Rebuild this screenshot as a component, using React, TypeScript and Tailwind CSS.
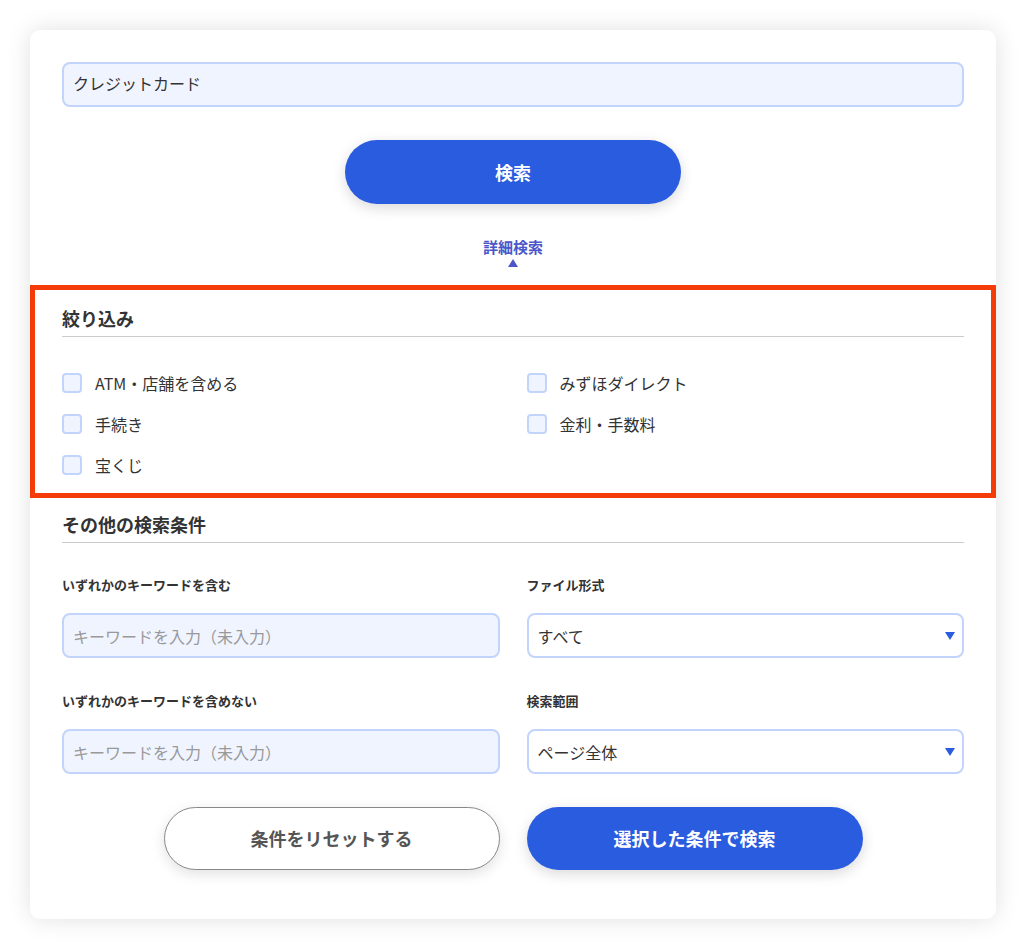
import React from "react";

const font = { fontFamily: '"Noto Sans CJK JP", "Noto Sans", sans-serif' };

const filters = [
  "ATM・店舗を含める",
  "みずほダイレクト",
  "手続き",
  "金利・手数料",
  "宝くじ",
];

function Checkbox({ label }: { label: string }) {
  return (
    <label className="flex h-[20px] items-center gap-[13px]">
      <span className="h-[20px] w-[20px] shrink-0 rounded-[4px] border-2 border-[#c3d4fc] bg-[#eff4ff]" />
      <span className="text-[16px] leading-none text-[#333]">{label}</span>
    </label>
  );
}

function Caret() {
  return (
    <svg width="10" height="8" viewBox="0 0 10 8" className="shrink-0">
      <path d="M0 0h10L5 8z" fill="#2a5ce0" />
    </svg>
  );
}

function TextField({ placeholder }: { placeholder: string }) {
  return (
    <div className="flex h-[45px] items-center rounded-[8px] border-2 border-[#c3d4fc] bg-[#eff4ff] px-[9px] text-[16px] text-[#999]">
      {placeholder}
    </div>
  );
}

function SelectField({ value }: { value: string }) {
  return (
    <div className="flex h-[45px] items-center justify-between rounded-[8px] border-2 border-[#c3d4fc] bg-white pl-[9px] pr-[7px] text-[16px] text-[#333]">
      <span>{value}</span>
      <Caret />
    </div>
  );
}

function SectionTitle({ children }: { children: React.ReactNode }) {
  return (
    <div className="border-b border-[#cccccc] pb-[5px]">
      <h2 className="text-[18px] font-bold leading-[26px] text-[#333]">{children}</h2>
    </div>
  );
}

export default function App() {
  return (
    <div className="min-h-[950px] bg-white p-[30px]" style={font}>
      <div className="rounded-[10px] bg-white px-8 pb-[49px] pt-[32px] shadow-[0_0_24px_rgba(0,0,0,0.12)]">
        {/* keyword */}
        <div className="flex h-[45px] items-center rounded-[8px] border-2 border-[#c3d4fc] bg-[#eff4ff] px-[9px] pb-[3px] text-[16px] text-[#333]">
          クレジットカード
        </div>

        <div className="mt-[33px] flex justify-center">
          <button className="h-[64px] w-[336px] rounded-full bg-[#2a5ce0] text-[18px] font-bold text-white shadow-[0_4px_14px_rgba(0,0,0,0.15)]">
            検索
          </button>
        </div>

        <div className="mt-[33px] flex flex-col items-center text-[#4a56c9]">
          <span className="text-[15px] font-bold leading-[20px]">詳細検索</span>
          <svg width="10" height="8" viewBox="0 0 10 8" className="mt-[2px]">
            <path d="M5 0l5 8H0z" fill="#4a56c9" />
          </svg>
        </div>

        {/* filters */}
        <div className="-mx-8 mt-[18px] border-[5px] border-[#f53b0a] px-[27px] pb-[18px] pt-[15px]">
          <SectionTitle>絞り込み</SectionTitle>
          <div className="mt-[36px] grid grid-cols-2 gap-x-[27px] gap-y-[21px]">
            {filters.map((f) => (
              <Checkbox key={f} label={f} />
            ))}
          </div>
        </div>

        {/* other conditions */}
        <div className="mt-[13px]">
          <SectionTitle>その他の検索条件</SectionTitle>
          <div className="mt-[32px] grid grid-cols-2 gap-x-[27px]">
            <div>
              <div className="text-[13px] font-bold leading-[20px] text-[#333]">いずれかのキーワードを含む</div>
              <div className="mt-[18px]">
                <TextField placeholder="キーワードを入力（未入力）" />
              </div>
            </div>
            <div>
              <div className="text-[13px] font-bold leading-[20px] text-[#333]">ファイル形式</div>
              <div className="mt-[18px]">
                <SelectField value="すべて" />
              </div>
            </div>
            <div className="mt-[33px]">
              <div className="text-[13px] font-bold leading-[20px] text-[#333]">いずれかのキーワードを含めない</div>
              <div className="mt-[18px]">
                <TextField placeholder="キーワードを入力（未入力）" />
              </div>
            </div>
            <div className="mt-[33px]">
              <div className="text-[13px] font-bold leading-[20px] text-[#333]">検索範囲</div>
              <div className="mt-[18px]">
                <SelectField value="ページ全体" />
              </div>
            </div>
          </div>
        </div>

        <div className="mt-[33px] flex justify-center gap-[27px]">
          <button className="h-[63px] w-[336px] rounded-full border border-[#888] bg-white text-[18px] font-bold text-[#555] shadow-[0_4px_14px_rgba(0,0,0,0.12)]">
            条件をリセットする
          </button>
          <button className="h-[63px] w-[336px] rounded-full bg-[#2a5ce0] text-[18px] font-bold text-white shadow-[0_4px_14px_rgba(0,0,0,0.15)]">
            選択した条件で検索
          </button>
        </div>
      </div>
    </div>
  );
}
